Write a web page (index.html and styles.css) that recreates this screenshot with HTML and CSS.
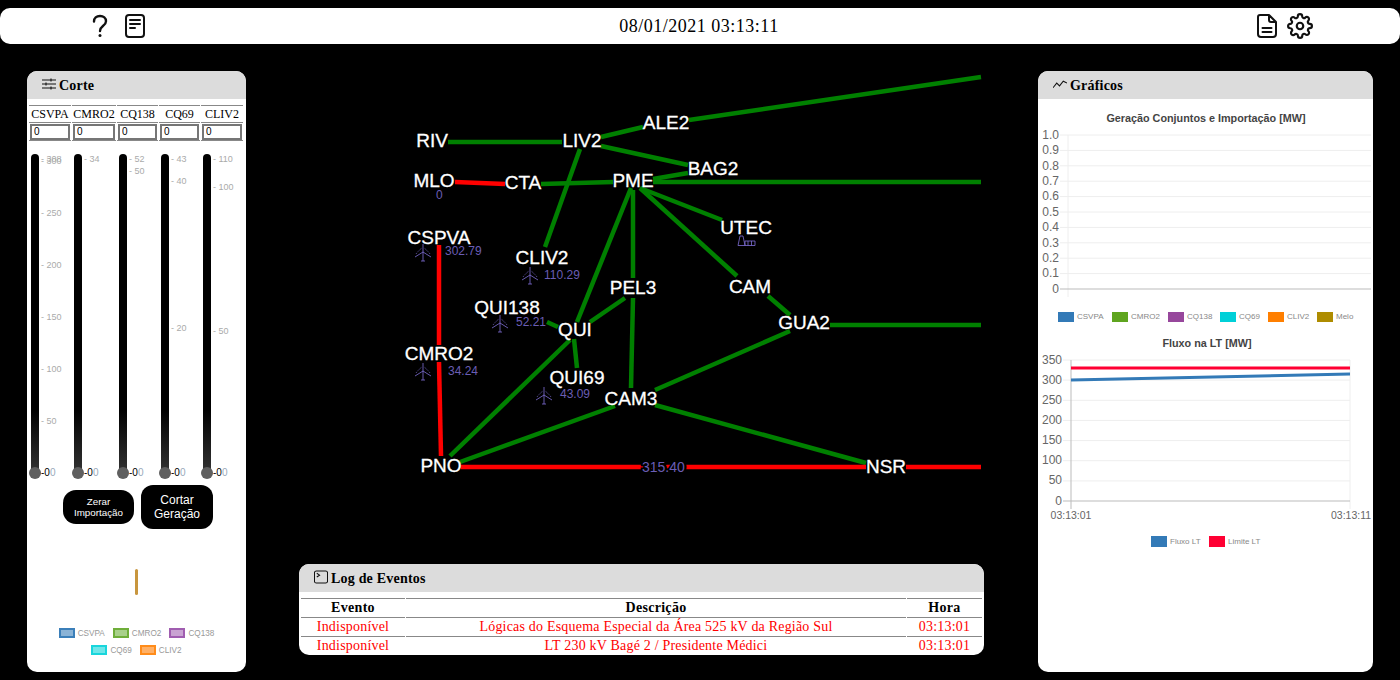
FILE: index.html
```html
<!DOCTYPE html>
<html lang="en">
<head>
  <meta charset="UTF-8" />
  <title>Painel de Corte</title>
  <link rel="stylesheet" href="styles.css">
</head>
<body>
  <header class="topbar">
    <div class="topbar-icons left-icons">
      <svg class="icon-help" width="16" height="24" viewBox="0 0 16 24"><path d="M2 7.500C2 4 4.500 2 8 2s6 2 6 5.200c0 2.600-1.600 3.700-3.300 5C9 13.500 8 14.500 8 17" /><circle cx="8" cy="21.500" r="1.500" class="dot" /></svg>
      <svg class="icon-journal" width="22" height="26" viewBox="0 0 22 26"><rect x="2" y="2" width="18" height="22" rx="3" /><path d="M6 7h10M6 11h10M6 15h5" /></svg>
    </div>
    <div class="clock">08/01/2021 03:13:11</div>
    <div class="topbar-icons right-icons">
      <svg class="icon-file" width="22" height="26" viewBox="0 0 22 26"><path d="M4 2h9l7 7v12a3 3 0 0 1-3 3H5a3 3 0 0 1-3-3V4a2 2 0 0 1 2-2zM13 2v5a2 2 0 0 0 2 2h5M6.500 15h9M6.500 19h9" /></svg>
      <svg class="icon-gear" width="26" height="26" viewBox="0 0 24 24"><circle cx="12" cy="12" r="3" /><path d="M19.400 15a1.650 1.650 0 0 0 .33 1.820l.06.06a2 2 0 0 1 0 2.830 2 2 0 0 1-2.830 0l-.06-.06a1.650 1.650 0 0 0-1.820-.33 1.650 1.650 0 0 0-1 1.510V21a2 2 0 0 1-2 2 2 2 0 0 1-2-2v-.09A1.650 1.650 0 0 0 9 19.400a1.650 1.650 0 0 0-1.820.33l-.06.06a2 2 0 0 1-2.830 0 2 2 0 0 1 0-2.830l.06-.06a1.650 1.650 0 0 0 .33-1.820 1.650 1.650 0 0 0-1.510-1H3a2 2 0 0 1-2-2 2 2 0 0 1 2-2h.09A1.650 1.650 0 0 0 4.600 9a1.650 1.650 0 0 0-.33-1.820l-.06-.06a2 2 0 0 1 0-2.830 2 2 0 0 1 2.830 0l.06.06a1.650 1.650 0 0 0 1.820.33H9a1.650 1.650 0 0 0 1-1.510V3a2 2 0 0 1 2-2 2 2 0 0 1 2 2v.09a1.650 1.650 0 0 0 1 1.510 1.650 1.650 0 0 0 1.820-.33l.06-.06a2 2 0 0 1 2.830 0 2 2 0 0 1 0 2.830l-.06.06a1.650 1.650 0 0 0-.33 1.820V9a1.650 1.650 0 0 0 1.510 1H21a2 2 0 0 1 2 2 2 2 0 0 1-2 2h-.09a1.650 1.650 0 0 0-1.510 1z" /></svg>
    </div>
  </header>

  <main class="main">
    <section class="panel panel-corte">
      <div class="panel-header">
        <svg class="head-icon" width="14" height="12" viewBox="0 0 14 12"><path d="M0 2h14M0 6h14M0 10h14" /><path class="knob" d="M9 .5v3M4 4.500v3M9 8.500v3" /></svg>
        <span>Corte</span>
      </div>
      <table class="cut-table">
        <tr><th class="c1">CSVPA</th><th class="c2">CMRO2</th><th class="c3">CQ138</th><th class="c3">CQ69</th><th class="c1">CLIV2</th></tr>
        <tr>
          <td><input type="text" value="0"></td>
          <td><input type="text" value="0"></td>
          <td><input type="text" value="0"></td>
          <td><input type="text" value="0"></td>
          <td><input type="text" value="0"></td>
        </tr>
      </table>

      <div class="sliders">
        <div class="slider s1">
          <div class="track"></div><div class="thumb"></div>
          <span class="tick" style="top:-2px">- 308</span>
          <span class="tick" style="top:0px">- 300</span>
          <span class="tick" style="top:52px">- 250</span>
          <span class="tick" style="top:104px">- 200</span>
          <span class="tick" style="top:156px">- 150</span>
          <span class="tick" style="top:208px">- 100</span>
          <span class="tick" style="top:260px">- 50</span>
          <span class="tick zero" style="top:312px">-0<i>0</i></span>
        </div>
        <div class="slider s2">
          <div class="track"></div><div class="thumb"></div>
          <span class="tick" style="top:-2px">- 34</span>
          <span class="tick zero" style="top:312px">-0<i>0</i></span>
        </div>
        <div class="slider s3">
          <div class="track"></div><div class="thumb"></div>
          <span class="tick" style="top:-2px">- 52</span>
          <span class="tick" style="top:10px">- 50</span>
          <span class="tick zero" style="top:312px">-0<i>0</i></span>
        </div>
        <div class="slider s4">
          <div class="track"></div><div class="thumb"></div>
          <span class="tick" style="top:-2px">- 43</span>
          <span class="tick" style="top:20px">- 40</span>
          <span class="tick" style="top:167px">- 20</span>
          <span class="tick zero" style="top:312px">-0<i>0</i></span>
        </div>
        <div class="slider s5">
          <div class="track"></div><div class="thumb"></div>
          <span class="tick" style="top:-2px">- 110</span>
          <span class="tick" style="top:26px">- 100</span>
          <span class="tick" style="top:170px">- 50</span>
          <span class="tick zero" style="top:312px">-0<i>0</i></span>
        </div>
      </div>

      <div class="cut-buttons">
        <button class="btn btn-small">Zerar<br>Importação</button>
        <button class="btn btn-large">Cortar<br>Geração</button>
      </div>

      <div class="bar-mark"></div>

      <div class="legend">
        <span class="legend-item"><b class="swatch sw-blue"></b>CSVPA</span>
        <span class="legend-item"><b class="swatch sw-green"></b>CMRO2</span>
        <span class="legend-item"><b class="swatch sw-purple"></b>CQ138</span>
        <span class="legend-item"><b class="swatch sw-cyan"></b>CQ69</span>
        <span class="legend-item"><b class="swatch sw-orange"></b>CLIV2</span>
      </div>
    </section>

    <section class="center">
      <svg class="diagram" width="792" height="493" viewBox="246 71 792 493">
        <defs>
          <g id="turbine" class="turbine">
            <path d="M0 0V9M-2 9H2M0 0V-8M0 0L-8 5M0 0L8 5" />
            <path stroke-dasharray="1 1" d="M-7 2Q-4 -2 -1 -4M7 2Q4 -2 1 -4" />
          </g>
        </defs>
        <g class="green">
          <path d="M448 142H562" />
          <path d="M601 137L643 127" />
          <path d="M689 120L981 77" />
          <path d="M601 146L688 165" />
          <path d="M653 179L688 173" />
          <path d="M653 182H981" />
          <path d="M541 184L613 182" />
          <path d="M580 149L545 247" />
          <path d="M640 188L722 220" />
          <path d="M640 188L737 276" />
          <path d="M768 296L790 315" />
          <path d="M830 325H981" />
          <path d="M633 190V278" />
          <path d="M631 188L577 322" />
          <path d="M625 298L590 322" />
          <path d="M547 322L558 327" />
          <path d="M574 339L577 368" />
          <path d="M570 340L450 456" />
          <path d="M633 298L631 388" />
          <path d="M655 390L790 331" />
          <path d="M655 405L866 463" />
          <path d="M615 406L460 462" />
        </g>
        <g class="red">
          <path d="M455 182L505 184" />
          <path d="M439 245V345" />
          <path d="M439 362L441 456" />
          <path d="M461 467H866" />
          <path d="M906 467H981" />
        </g>

        <g class="node">
          <text x="432" y="147">RIV</text>
          <text x="582" y="147">LIV2</text>
          <text x="666" y="129">ALE2</text>
          <text x="713" y="175">BAG2</text>
          <text x="434" y="187">MLO</text>
          <text x="523" y="189">CTA</text>
          <text x="633" y="187">PME</text>
          <text x="746" y="234">UTEC</text>
          <text x="439" y="244">CSPVA</text>
          <text x="542" y="264">CLIV2</text>
          <text x="750" y="293">CAM</text>
          <text x="633" y="294">PEL3</text>
          <text x="507" y="314">QUI138</text>
          <text x="804" y="329">GUA2</text>
          <text x="575" y="336">QUI</text>
          <text x="439" y="360">CMRO2</text>
          <text x="577" y="384">QUI69</text>
          <text x="631" y="405">CAM3</text>
          <text x="441" y="472">PNO</text>
          <text x="886" y="473">NSR</text>
        </g>

        <g class="value">
          <text x="436" y="199">0</text>
          <text x="445" y="255">302.79</text>
          <text x="544" y="279">110.29</text>
          <text x="516" y="326">52.21</text>
          <text x="448" y="375">34.24</text>
          <text x="560" y="398">43.09</text>
          <text class="line-value" x="642" y="472">315.40</text>
        </g>

        <use href="#turbine" x="423" y="252" />
        <use href="#turbine" x="530" y="275" />
        <use href="#turbine" x="500" y="323" />
        <use href="#turbine" x="423" y="371" />
        <use href="#turbine" x="544" y="395" />
        <path class="factory" d="M738 245.500L740 236H743L745 245.500ZM745 241H755V245.500H745ZM748 241V245.500M751.500 241V245.500" />
      </svg>

      <div class="panel panel-log">
        <div class="panel-header">
          <svg class="head-icon term" width="14" height="14" viewBox="0 0 15 14"><rect x=".5" y=".5" width="14" height="13" rx="2" /><path d="M3 3l3 2-3 2" /></svg>
          <span>Log de Eventos</span>
        </div>
        <table class="log-table">
          <tr><th class="col-event">Evento</th><th>Descrição</th><th class="col-time">Hora</th></tr>
          <tr><td>Indisponível</td><td>Lógicas do Esquema Especial da Área 525 kV da Região Sul</td><td>03:13:01</td></tr>
          <tr><td>Indisponível</td><td>LT 230 kV Bagé 2 / Presidente Médici</td><td>03:13:01</td></tr>
        </table>
      </div>
    </section>

    <section class="panel panel-charts">
      <div class="panel-header">
        <svg class="head-icon" width="14" height="10" viewBox="0 0 15 10"><path d="M0 9L4 4l3 3 4-5 4 2" /></svg>
        <span>Gráficos</span>
      </div>
      <svg class="charts" width="335" height="573" viewBox="1038 99 335 573">
        <text class="chart-title" x="1206" y="122">Geração Conjuntos e Importação [MW]</text>
        <g class="grid">
          <path d="M1060 135H1371M1060 150.400H1371M1060 165.800H1371M1060 181.200H1371M1060 196.600H1371M1060 212H1371M1060 227.400H1371M1060 242.800H1371M1060 258.200H1371M1060 273.600H1371" />
          <path d="M1068 135V297" />
        </g>
        <path class="axis" d="M1060 289H1371" />
        <g class="ylabel">
          <text x="1059" y="138.500">1.0</text>
          <text x="1059" y="153.500">0.9</text>
          <text x="1059" y="169.500">0.8</text>
          <text x="1059" y="184.500">0.7</text>
          <text x="1059" y="199.500">0.6</text>
          <text x="1059" y="215.500">0.5</text>
          <text x="1059" y="230.500">0.4</text>
          <text x="1059" y="246.500">0.3</text>
          <text x="1059" y="261.500">0.2</text>
          <text x="1059" y="276.500">0.1</text>
          <text x="1059" y="292.500">0</text>
        </g>
        <g class="chart-legend">
          <rect x="1058" y="312" width="16" height="10" fill="#337ab7" /><text x="1077" y="319">CSVPA</text>
          <rect x="1112" y="312" width="16" height="10" fill="#5fa51f" /><text x="1131" y="319">CMRO2</text>
          <rect x="1168" y="312" width="16" height="10" fill="#97479c" /><text x="1187" y="319">CQ138</text>
          <rect x="1220" y="312" width="16" height="10" fill="#00d0d8" /><text x="1239" y="319">CQ69</text>
          <rect x="1268" y="312" width="16" height="10" fill="#ff7f00" /><text x="1287" y="319">CLIV2</text>
          <rect x="1317" y="312" width="16" height="10" fill="#ae8c00" /><text x="1336" y="319">Melo</text>
        </g>

        <text class="chart-title" x="1207" y="347">Fluxo na LT [MW]</text>
        <g class="grid">
          <path d="M1063 360H1350M1063 380.100H1350M1063 400.300H1350M1063 420.400H1350M1063 440.600H1350M1063 460.700H1350M1063 480.900H1350" />
          <path d="M1350 360V509" />
        </g>
        <path class="axis" d="M1063 501H1350M1071 360V509" />
        <g class="ylabel">
          <text x="1062" y="363.500">350</text>
          <text x="1062" y="383.500">300</text>
          <text x="1062" y="403.500">250</text>
          <text x="1062" y="423.500">200</text>
          <text x="1062" y="444">150</text>
          <text x="1062" y="464">100</text>
          <text x="1062" y="484">50</text>
          <text x="1062" y="505">0</text>
        </g>
        <text class="xlabel" x="1071" y="519">03:13:01</text>
        <text class="xlabel" x="1351" y="519">03:13:11</text>
        <path class="flow" d="M1071 380L1350 374" />
        <path class="limit" d="M1071 368H1350" />
        <g class="chart-legend">
          <rect x="1151" y="536" width="16" height="11" fill="#337ab7" /><text x="1170" y="544">Fluxo LT</text>
          <rect x="1209" y="536" width="16" height="11" fill="#ff0033" /><text x="1228" y="544">Limite LT</text>
        </g>
      </svg>
    </section>
  </main>
</body>
</html>
```

FILE: styles.css
```css
body {
  margin: 0;
  height: 680px;
  overflow: hidden;
  background: #000;
  font-family: 'Liberation Serif', serif;
}

/* top bar */
.topbar {
  margin-top: 8px;
  height: 36px;
  background: #fff;
  border-radius: 10px;
  display: flex;
  align-items: center;
}

.topbar svg {
  fill: none;
  stroke: #111;
  stroke-width: 2;
  stroke-linecap: round;
  stroke-linejoin: round;
}

.topbar svg.icon-help {
  stroke-width: 2.400;
}

.topbar svg .dot {
  fill: #111;
  stroke: none;
}

.topbar-icons {
  display: flex;
  align-items: center;
}

.left-icons {
  margin-left: 92px;
  gap: 16px;
}

.right-icons {
  margin-right: 87px;
  gap: 9px;
}

.clock {
  flex: 1;
  text-align: center;
  font-size: 18px;
  letter-spacing: 0.5px;
  padding-right: 4px;
}

/* layout */
.main {
  display: flex;
  margin-top: 27px;
  padding-left: 27px;
}

.panel {
  background: #fff;
  border-radius: 10px;
  overflow: hidden;
}

.panel-header {
  height: 28px;
  background: #dcdcdc;
  display: flex;
  align-items: center;
  gap: 3px;
  padding-left: 15px;
  font-weight: bold;
  font-size: 14px;
  letter-spacing: 0.2px;
}

.panel-header span {
  padding-top: 2px;
}

.head-icon {
  fill: none;
  stroke: #111;
  stroke-width: 1.100;
  margin-top: -3px;
}

.panel-corte {
  width: 219px;
  height: 601px;
}

.center {
  width: 792px;
}

.diagram {
  display: block;
}

.panel-charts {
  width: 335px;
  height: 601px;
}

.charts {
  display: block;
}

/* corte panel */
.cut-table {
  margin: 6px 0 0 1px;
  border-collapse: separate;
  border-spacing: 1px 0;
  table-layout: fixed;
  width: 216px;
}

.cut-table .c1 { width: 42px; }
.cut-table .c2 { width: 44px; }
.cut-table .c3 { width: 41px; }

.cut-table th {
  font-weight: normal;
  font-size: 12px;
  height: 16px;
  padding: 0;
  border-top: 1px solid #888;
  border-bottom: 1px solid #888;
  line-height: 16px;
}

.cut-table td {
  padding: 0;
  height: 17px;
  border-bottom: 1px solid #888;
}

.cut-table input {
  box-sizing: border-box;
  display: block;
  width: calc(100% - 2px);
  height: 16px;
  margin: 0 auto;
  padding: 0 2px;
  border: 2px solid #767676;
  font-family: 'Liberation Sans', sans-serif;
  font-size: 10px;
}

.sliders {
  display: flex;
  margin-top: 13px;
  padding-left: 4px;
  height: 331px;
}

.slider {
  position: relative;
  width: 43px;
}

.s2 { width: 45px; }
.s3 { width: 42px; }
.s4 { width: 42px; }

.track {
  position: absolute;
  left: 0;
  top: 0;
  width: 8px;
  height: 319px;
  border-radius: 4px;
  background: linear-gradient(#000 80%, #333);
}

.thumb {
  position: absolute;
  left: -2px;
  top: 313px;
  width: 12px;
  height: 12px;
  border-radius: 50%;
  background: #5f5f5f;
}

.tick {
  position: absolute;
  left: 10px;
  margin-top: 1px;
  white-space: nowrap;
  font-family: 'Liberation Sans', sans-serif;
  font-size: 9px;
  line-height: 12px;
  color: #aaa;
}

.tick.zero {
  font-size: 10px;
  color: #000;
}

.tick.zero i {
  font-style: normal;
  color: #9ab;
}

.cut-buttons {
  display: flex;
  justify-content: center;
  align-items: center;
  gap: 7px;
  padding-left: 3px;
}

.btn {
  border: none;
  background: #000;
  color: #fff;
  font-family: 'Liberation Sans', sans-serif;
  padding: 0;
  border-radius: 12px;
}

.btn-small {
  width: 71px;
  height: 34px;
  font-size: 9.800px;
  border-radius: 13px;
}

.btn-large {
  width: 72px;
  height: 44px;
  font-size: 12px;
}

.bar-mark {
  width: 3px;
  height: 26px;
  margin: 40px auto 0;
  background: #c8963e;
  border-radius: 2px;
}

.legend {
  display: flex;
  flex-wrap: wrap;
  justify-content: center;
  gap: 7px 8px;
  margin: 33px auto 0;
  width: 165px;
  font-family: 'Liberation Sans', sans-serif;
  font-size: 8.200px;
  color: #999;
}

.legend-item {
  display: flex;
  align-items: center;
  gap: 3px;
}

.swatch {
  box-sizing: border-box;
  display: block;
  width: 16px;
  height: 10px;
  border: 2px solid;
}

.sw-blue { border-color: #3b7fb9; background: #8ab3d6; }
.sw-green { border-color: #6fae3a; background: #a8d08a; }
.sw-purple { border-color: #a05db0; background: #c9a3d2; }
.sw-cyan { border-color: #19d6dc; background: #6fe6e9; }
.sw-orange { border-color: #ff8c1a; background: #ffb066; }

/* diagram */
.green path, .red path {
  fill: none;
  stroke-width: 4.500;
}

.green path { stroke: #008000; }
.red path { stroke: #f00; }

.node text {
  font-family: 'Liberation Sans', sans-serif;
  font-size: 19px;
  fill: #fff;
  stroke: #fff;
  stroke-width: 0.3;
  text-anchor: middle;
}

.value text {
  font-family: 'Liberation Sans', sans-serif;
  font-size: 12px;
  fill: #6a5db5;
}

.value .line-value {
  font-size: 14px;
  stroke: #000;
  stroke-width: 4;
  paint-order: stroke;
}

.turbine path, .factory {
  fill: none;
  stroke: #8070d8;
  stroke-width: 0.8;
}

/* log panel */
.panel-log {
  width: 685px;
  height: 91px;
  margin-left: 53px;
}

.log-table {
  margin: 6px 0 0 1px;
  width: 683px;
  border-collapse: separate;
  border-spacing: 1px 0;
  table-layout: fixed;
  font-size: 14px;
  letter-spacing: 0.2px;
}

.log-table th, .log-table td {
  border-top: 1px solid #888;
  height: 18px;
  padding: 0;
  line-height: 18px;
  text-align: center;
}

.log-table th {
  letter-spacing: 0.3px;
}

.log-table td {
  color: #f00;
}

.col-event { width: 104px; }
.col-time { width: 75px; }

/* charts */
.chart-title {
  font-family: 'Liberation Sans', sans-serif;
  font-size: 10.800px;
  font-weight: bold;
  fill: #444;
  text-anchor: middle;
}

.grid path {
  fill: none;
  stroke: #eee;
  stroke-width: 1;
}

.axis {
  fill: none;
  stroke: #bbb;
  stroke-width: 1;
}

.ylabel text {
  font-family: 'Liberation Sans', sans-serif;
  font-size: 12px;
  fill: #666;
  text-anchor: end;
}

.xlabel {
  font-family: 'Liberation Sans', sans-serif;
  font-size: 10.500px;
  fill: #666;
  text-anchor: middle;
}

.chart-legend text {
  font-family: 'Liberation Sans', sans-serif;
  font-size: 8px;
  fill: #888;
}

.flow, .limit {
  fill: none;
  stroke-width: 3;
}

.flow { stroke: #337ab7; }
.limit { stroke: #ff0033; }
```
